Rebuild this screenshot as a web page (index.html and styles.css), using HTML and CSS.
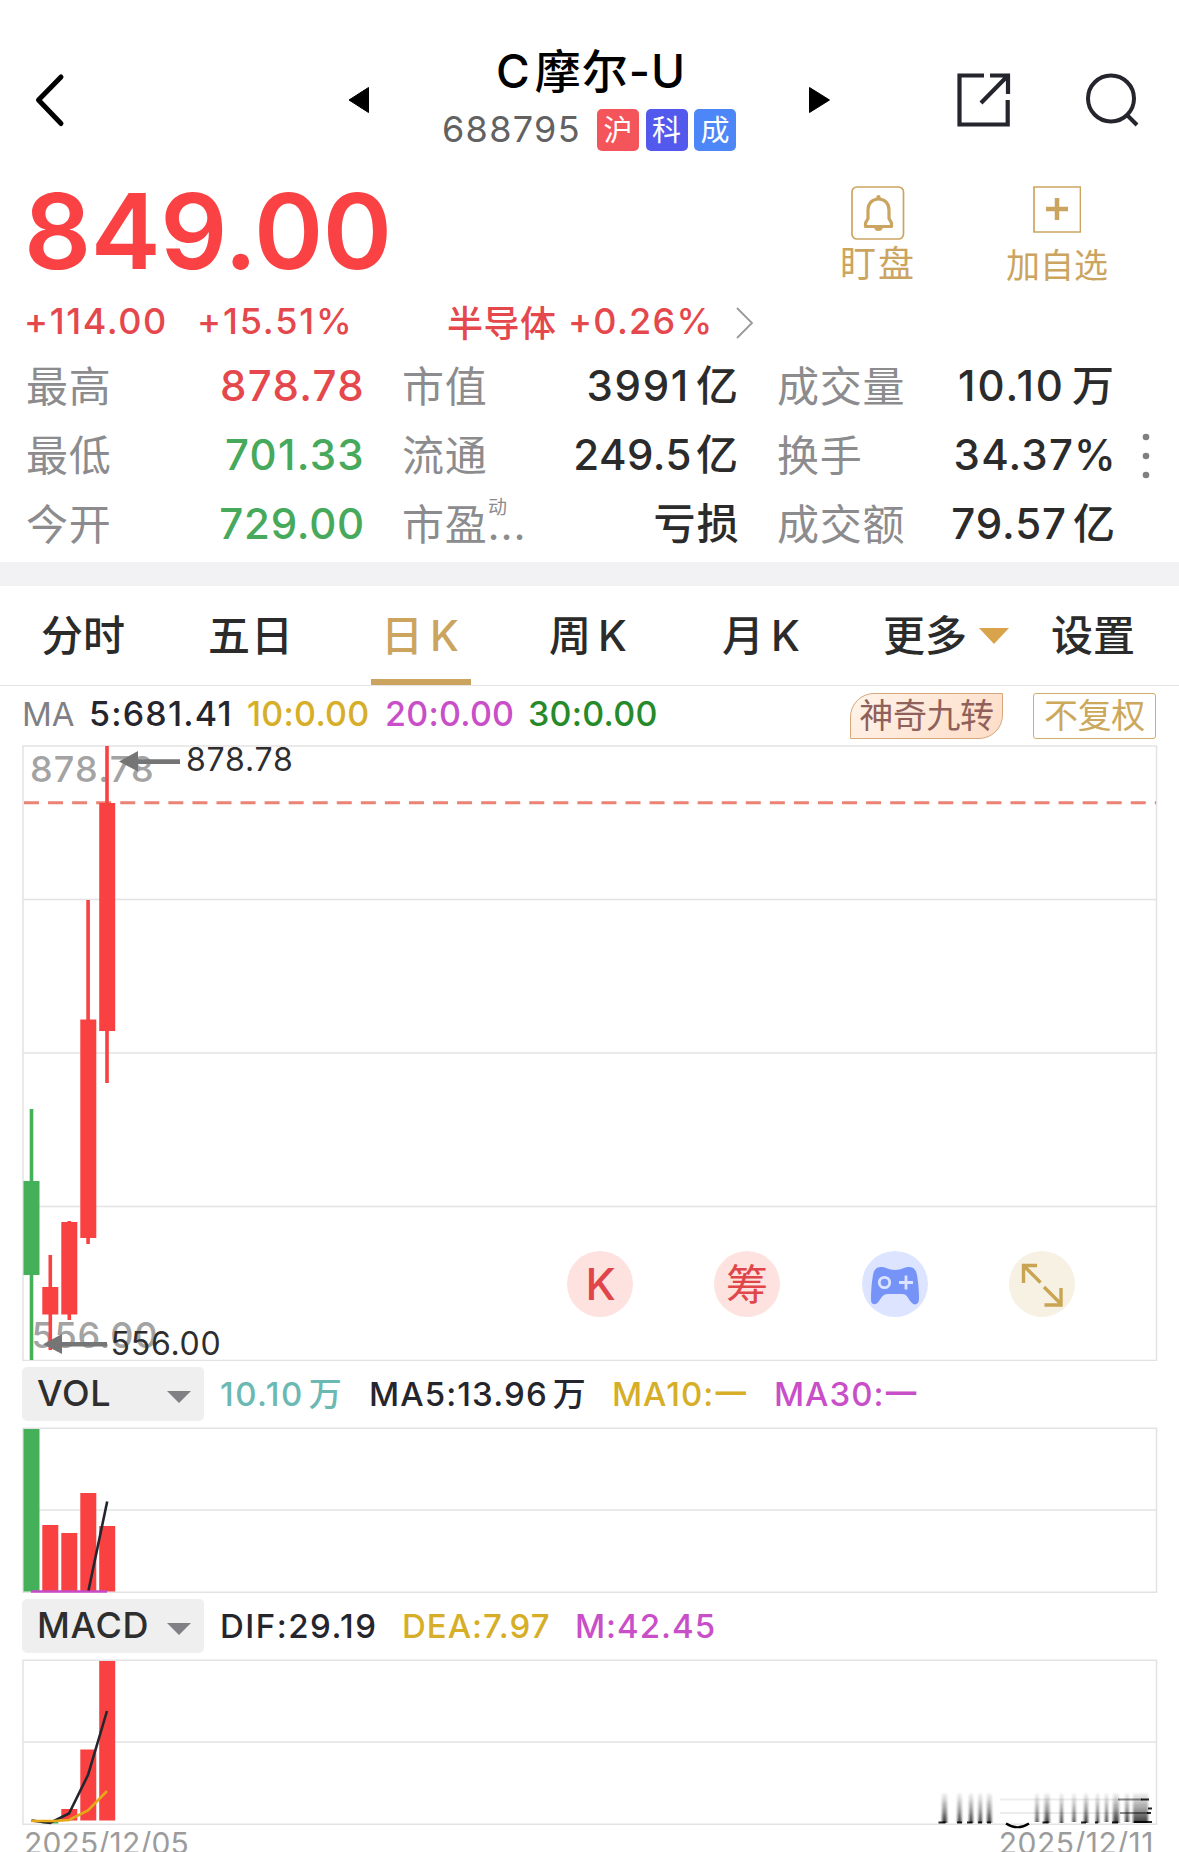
FILE: index.html
```html
<!DOCTYPE html>
<html lang="zh-CN">
<head>
<meta charset="utf-8">
<title>C摩尔-U 688795</title>
<link rel="stylesheet" href="styles.css">
</head>
<body>
<header class="topbar">
  <svg class="back" width="40" height="60" viewBox="30 70 40 60"><path d="M62 77 39.500 100 62 123.500" fill="none" stroke="#000" stroke-width="5" stroke-linecap="round" stroke-linejoin="round"/></svg>
  <svg width="22" height="28" viewBox="0 0 22 28"><path d="M20.500 1.500v25L1 14z" stroke="#000" stroke-linejoin="round"/></svg>
  <div class="heading">
    <h1 class="name"><i>C</i>摩尔-U</h1>
    <div class="code-row"><span class="code">688795</span><span class="badge hu">沪</span><span class="badge ke">科</span><span class="badge cheng">成</span></div>
  </div>
  <svg width="22" height="28" viewBox="0 0 22 28"><path d="M.5 1.500v25L20.500 14z" stroke="#000" stroke-linejoin="round"/></svg>
  <svg class="share" width="54" height="54" viewBox="0 0 54 54" fill="none" stroke="#25252d" stroke-width="4.200"><path d="M27 2.500H2.500v49h48.200V27M33 2.500h18V21M24 30 50 3.500"/></svg>
  <svg class="search" width="54" height="54" viewBox="0 0 54 54" fill="none" stroke="#25252d" stroke-width="4"><circle cx="25" cy="25.500" r="23"/><path d="m41 42 10 10"/></svg>
</header>

<section class="quote">
  <div class="price">849.00</div>
  <div class="action watch">
    <svg width="54" height="54" viewBox="0 0 54 54" fill="none" stroke="#cba560"><rect x="1" y="1" width="51.500" height="52" rx="5" stroke-width="1.700"/><path d="M27.500 13c-6.500 0-10.500 4.800-10.500 11v8.500L14.500 37v3.500h26V37L38 32.500V24c0-6.200-4-11-10.500-11Z" stroke-width="3.200" stroke-linejoin="round"/><path d="M25.300 12a2.200 3 0 0 1 4.400 0zM23 41.500h9q-1 3.500-4.500 3.500T23 41.500Z" fill="#cba560" stroke="none"/></svg>
    <span>盯盘</span>
  </div>
  <div class="action add">
    <svg width="48" height="47" viewBox="0 0 48 47" fill="none" stroke="#cba560"><path d="M1 1h46.500v45H1z" stroke-width="1.700"/><path d="M13 23h22M24 12v22" stroke-width="4.500"/></svg>
    <span>加自选</span>
  </div>
</section>

<section class="change">
  <span class="diff">+114.00</span><span class="pct">+15.51%</span><span class="sector">半导体</span><span class="sector-pct">+0.26%</span>
  <svg width="18" height="32" viewBox="0 0 18 32"><path d="m1 1 15 15L1 31" fill="none" stroke="#999" stroke-width="1.800"/></svg>
</section>

<section class="stats">
  <div class="stat-grid">
    <div class="stat"><span>最高</span><b class="up">878.78</b></div>
    <div class="stat"><span>市值</span><b class="cap">3991<i>亿</i></b></div>
    <div class="stat"><span>成交量</span><b class="turn">10.10<i>万</i></b></div>
    <div class="stat"><span>最低</span><b class="down">701.33</b></div>
    <div class="stat"><span>流通</span><b class="float">249.5<i>亿</i></b></div>
    <div class="stat"><span>换手</span><b class="rate">34.37%</b></div>
    <div class="stat"><span>今开</span><b class="down open">729.00</b></div>
    <div class="stat"><span>市盈<sup>动</sup><em>...</em></span><b>亏损</b></div>
    <div class="stat"><span>成交额</span><b class="amount">79.57<i>亿</i></b></div>
  </div>
  <svg class="more" width="8" height="46" viewBox="0 0 8 46" fill="#808080"><circle cx="4" cy="4" r="3.300"/><circle cx="4" cy="23" r="3.300"/><circle cx="4" cy="42" r="3.300"/></svg>
</section>

<nav class="tabs">
  <span>分时</span><span class="wide">五日</span><span class="active"><u>日<i>K</i></u></span><span>周<i>K</i></span><span>月<i>K</i></span>
  <span class="dropdown">更多<svg width="30" height="16" viewBox="0 0 30 16"><path d="M0 0h30L15 16z" fill="#d9a34b"/></svg></span><span>设置</span>
</nav>

<div class="ma-row">
  <span class="ma-label">MA</span><span class="ma5">5:681.41</span><span class="gold">10:0.00</span><span class="magenta">20:0.00</span><span class="green">30:0.00</span>
  <span class="nine">神奇九转</span><span class="adjust">不复权</span>
</div>

<section class="chart">
  <svg width="1179" height="616" viewBox="0 745 1179 616">
    <g fill="none" stroke="#e3e3e5" stroke-width="1.500"><path d="M23 899.500H1156M23 1053H1156M23 1206.500H1156"/><path d="M23 746h1133.500v614.500H23z"/></g>
    <g class="axis"><text x="30" y="782">878.78</text><text class="low" x="31.500" y="1347.500">556.00</text></g>
    <path d="M24 802.700H1156" stroke="#ec8274" stroke-width="3" stroke-dasharray="15 9.060"/>
    <g fill="#45b05a"><path d="M23.500 1181h16v94h-16zM29.700 1109h3.600v251h-3.600z"/></g>
    <g fill="#fa4141"><path d="M42.300 1287h16v27.500h-16zM48.500 1255h3.600v95h-3.600zM61.300 1222h16v92.500h-16zM67.500 1221h3.600v99h-3.600zM80.300 1019.500h16V1238h-16zM86.300 900h3.600v344h-3.600zM99.200 803h16v228h-16zM105.200 746h3.600v337h-3.600z"/></g>
    <g fill="#757575"><path d="m119 761.500 19-10.500v8.200h42v4.800h-42v7.500zM43 1344.300l19-10.300v8h45v4.600H62v7.400z"/></g>
    <g class="mark"><text class="hi" x="186" y="771">878.78</text><text class="lo" x="110.500" y="1354.500">556.00</text></g>
  </svg>
  <div class="tools">
    <span class="tool k">K</span>
    <span class="tool chip">筹</span>
    <span class="tool game"><svg width="66" height="66" viewBox="0 0 66 66"><path d="M11 24c1-6 4-8 9-8 4 0 6 3 13 3s9-3 13-3c5 0 8 2 9 8 1.500 8 2 17 2 24 0 6-5 7-8 3-4-5-4-8-9-8H26c-5 0-6 3-9 7-3 5-8 4-8-1 0-8 .5-17 2-25Z" fill="#7693f8"/><circle cx="22.500" cy="31.500" r="5.200" fill="none" stroke="#dce4ff" stroke-width="2.800"/><path d="M37 31.500h14M44 24.500v14" stroke="#dce4ff" stroke-width="2.800"/></svg></span>
    <span class="tool expand"><svg width="66" height="66" viewBox="0 0 66 66" fill="none" stroke="#c9a452" stroke-width="3.400"><path d="M28 14.500H14.500V32M15 15l16.500 16.500M35 36l16.500 16.500M52 37v17H35.500"/></svg></span>
  </div>
</section>

<div class="indicator vol">
  <span class="select">VOL<svg width="24" height="12" viewBox="0 0 24 12"><path d="M0 0h24L12 12z" fill="#808085"/></svg></span>
  <span class="teal">10.10<i>万</i></span><span class="dark">MA5:13.96<i>万</i></span><span class="gold">MA10:一</span><span class="magenta">MA30:一</span>
</div>
<svg class="sub" width="1179" height="166" viewBox="0 1427 1179 166">
  <g fill="none" stroke="#e3e3e5" stroke-width="1.500"><path d="M23 1510H1156"/><path d="M23 1428.300h1133.500v163.900H23z"/></g>
  <path d="M23.500 1429h16v162.500h-16z" fill="#45b05a"/>
  <path d="M42.300 1525h16v66.500h-16zM61.300 1533h16v58.500h-16zM80.300 1493h16v98.500h-16zM99.200 1526h16v65.500h-16z" fill="#fa4141"/>
  <path d="M31 1591.500h76" stroke="#c74bc7" stroke-width="2.500"/>
  <path d="m88.500 1590.500 18.700-89" stroke="#25252d" stroke-width="2.600"/>
</svg>

<div class="indicator macd">
  <span class="select">MACD<svg width="24" height="12" viewBox="0 0 24 12"><path d="M0 0h24L12 12z" fill="#808085"/></svg></span>
  <span class="dark">DIF:29.19</span><span class="gold">DEA:7.97</span><span class="magenta">M:42.45</span>
</div>
<svg class="sub" width="1179" height="172" viewBox="0 1659 1179 172">
  <defs>
    <linearGradient id="fade" x1="0" y1="1792" x2="0" y2="1824" gradientUnits="userSpaceOnUse"><stop offset="0" stop-color="#222" stop-opacity="0"/><stop offset=".6" stop-color="#222" stop-opacity=".5"/><stop offset="1" stop-color="#000" stop-opacity=".85"/></linearGradient>
    <filter id="smear"><feGaussianBlur stdDeviation="1.1 0.6"/></filter>
  </defs>
  <g fill="none" stroke="#e3e3e5" stroke-width="1.500"><path d="M23 1742H1156"/><path d="M23 1660.300h1133.500v163.900H23z"/></g>
  <path d="M42.300 1821h16v2.500h-16z" fill="#45b05a"/>
  <path d="M61.300 1809h16v11.500h-16zM80.300 1749.500h16v71h-16zM99.200 1661h16v159.500h-16z" fill="#fa4141"/>
  <path d="M31.500 1820.500 50 1823 69 1813.500 88 1775l19-64" fill="none" stroke="#25252d" stroke-width="2.600"/>
  <path d="M31.500 1821H54l15-1 19-9.500 19-19.500" fill="none" stroke="#e6a817" stroke-width="2.600"/>
  <path filter="url(#smear)" d="M942 1792h5v31h-5zM957.500 1792h4v31h-4zM969 1792h4v31h-4zM978.500 1792h3.500v31h-3.500zM987 1792h4.500v31H987zM1035.500 1792h3v30h-3zM1044.500 1792h5v31h-5zM1060 1792h3v31h-3zM1072.500 1792h3v30h-3zM1084 1792h4v31h-4zM1096 1792h3v31h-3zM1105 1792h3v30h-3zM1113 1792h6v31h-6zM1125 1792h4v30h-4zM1133 1792h15v31h-15z" fill="url(#fade)"/>
  <path d="M1000 1799.500h120M1000 1813h120" stroke="#000" stroke-width="2" opacity=".07"/>
  <path d="M938.500 1822.500h7M957 1822.500h5M967 1822.500h5.500M978 1822.500h4M987 1822.500h4M1042.500 1822.500h6M1081 1822.500h5M1095 1822.500h3M1112 1822.500h6M1134 1822h18M1141 1799.500h8M1147 1813h4M1148 1808.500h4" stroke="#000" stroke-width="2.200" opacity=".85"/>
  <path d="M1118 1799.500h24M1120 1813h28" stroke="#000" stroke-width="2.200" opacity=".45"/>
  <path d="M1006 1823.500q11.500 7.500 23 0" fill="none" stroke="#000" stroke-width="2.200"/>
</svg>
<footer class="dates"><span>2025/12/05</span><span class="end">2025/12/11</span></footer>
</body>
</html>
```
FILE: styles.css
```css
* { box-sizing: border-box; }
html { overflow: hidden; }
body { margin: 0; width: 1179px; height: 1852px; overflow: hidden; background: #fff; color: #2b2b2b; font-family: Inter, "Noto Sans CJK SC", sans-serif; }
svg { display: block; }
i, em, b, u { font-style: normal; text-decoration: none; font-weight: inherit; }

.topbar { display: grid; grid-template-columns: 348px 94px 367px 149px 129px 92px; align-items: center; height: 170px; padding-top: 30px; }
.back { margin-left: 29px; }
.share, .search { margin-left: -1px; }
.heading { align-self: start; padding-top: 11px; }
.name { margin: 0; padding-left: 54px; font-size: 46px; line-height: 61px; font-weight: 500; letter-spacing: 1px; color: #000; }
.name i { margin-right: 4px; }
.code-row { display: flex; align-items: center; gap: 6.500px; height: 58px; margin-top: -1px; }
.code { width: 148.500px; font-size: 36px; line-height: 54px; margin-top: -3px; letter-spacing: 1.300px; color: #626262; }
.badge { width: 42px; height: 42px; border-radius: 5px; color: #fff; font-size: 29px; line-height: 43px; text-align: center; }
.hu { background: #f4555b; }
.ke { background: #5459ee; }
.cheng { background: #4c86f7; }

.quote { display: grid; grid-template-columns: 816px 166px 1fr; height: 120px; padding-left: 24px; }
.price { font-size: 105px; line-height: 121px; font-weight: 600; letter-spacing: -.5px; color: #fa4144; }
.action { color: #cba560; line-height: 42px; padding-top: 16px; }
.action span { display: block; }
.watch { font-size: 36px; letter-spacing: 2px; }
.watch svg { margin-left: 11px; }
.watch span { margin-top: 3px; }
.add { font-size: 34px; }
.add svg { margin-left: 27px; }
.add span { margin-top: 12px; }

.change { display: flex; align-items: center; height: 61px; padding-left: 24px; font-size: 36px; font-weight: 500; color: #e5484c; }
.diff { width: 173px; letter-spacing: 1.600px; }
.pct { width: 250px; letter-spacing: 1.850px; }
.sector { width: 121px; letter-spacing: .5px; }
.sector-pct { width: 168px; letter-spacing: 1.300px; }
.change svg { margin-top: 4px; }

.stats { display: flex; align-items: center; height: 211px; padding: 0 0 4px 26px; }
.stat-grid { display: grid; grid-template-columns: 339px 338px 340px; column-gap: 37px; grid-auto-rows: 69px; font-size: 42px; line-height: 69px; }
.stat { display: flex; justify-content: space-between; white-space: nowrap; }
.stat span { position: relative; padding-top: 1px; color: #8c8c8e; font-weight: 400; letter-spacing: .8px; }
.stat b { font-weight: 500; letter-spacing: 1.300px; }
.stat b i { margin-left: 6px; letter-spacing: 0; }
.stat .up { color: #e5484c; }
.stat .down { color: #46a95b; }
.stat .open { letter-spacing: .8px; }
.stat .cap { letter-spacing: 1.700px; margin-right: 2px; }
.stat .float { letter-spacing: .5px; margin-right: 2px; }
.stat .float i { margin-left: 4px; }
.stat .turn { letter-spacing: 2px; margin-right: 3px; }
.stat .turn i { margin-left: 7px; }
.stat .amount { letter-spacing: .9px; margin-right: 2px; }
.stat .rate { letter-spacing: 1.200px; }
.stat sup { position: absolute; left: 86px; top: -13px; font-size: 19px; line-height: 64px; }
.more { margin: 3px 0 0 25px; }

.tabs { display: grid; grid-template-columns: 167px 163px 178px 173px 161px 168px 1fr; height: 124px; padding-left: 41px; border-top: 24px solid #f2f2f5; border-bottom: 1px solid #e4e4e6; font-size: 42px; line-height: 99px; font-weight: 500; }
.wide { letter-spacing: 1px; }
.tabs i { margin-left: 7px; }
.active u { display: block; width: 100px; height: 99px; padding-left: 10px; border-bottom: 6px solid #cba560; color: #cba560; }
.dropdown { display: flex; align-items: center; gap: 12px; }

.ma-row { display: grid; grid-template-columns: 68px 158px 138px 143px 322px 183px 123px; height: 59px; padding-left: 21px; font-size: 34px; line-height: 56px; font-weight: 500; }
.ma-label { color: #808084; font-weight: 400; font-size: 33px; letter-spacing: 0; padding-left: 1px; }
.ma5 { letter-spacing: 1.200px; color: #25252d; }
.ma-row .gold, .ma-row .magenta, .ma-row .green { letter-spacing: .25px; }
.gold { color: #d6ae27; }
.magenta { color: #c84fc8; }
.green { color: #268a2b; }
.nine, .adjust { height: 46px; margin-top: 6.500px; line-height: 44px; font-weight: 400; text-align: center; letter-spacing: -.4px; }
.nine { width: 153px; border: 1.500px solid #d6a77d; border-radius: 24px 0 24px 0; background: linear-gradient(135deg, #fff4ea, #fddcc6); color: #90605a; }
.adjust { border: 1.500px solid #cfae6c; border-radius: 3px; color: #cba85c; }

.chart { position: relative; height: 616px; }
.axis { font-size: 36px; font-weight: 500; fill: #a3a3a3; letter-spacing: 1.200px; }
.low { letter-spacing: .7px; }
.mark { font-size: 32px; fill: #2e2e2e; }
.hi { letter-spacing: .8px; }
.lo { letter-spacing: .75px; }
.tools { position: absolute; left: 566.500px; top: 506px; display: flex; gap: 81.600px; }
.tool { width: 66px; height: 66px; border-radius: 50%; line-height: 67px; text-align: center; color: #e04549; font-size: 42px; }
.k { background: #fde2e0; font-size: 44px; font-weight: 500; padding-left: 2px; }
.chip { background: #fde2e0; }
.game { background: #dce4ff; }
.expand { background: #f7f1e4; }

.indicator { display: grid; height: 66px; padding-left: 22px; font-size: 33px; line-height: 66px; font-weight: 500; white-space: nowrap; }
.vol { grid-template-columns: 198px 149px 243px 162px 1fr; }
.macd { grid-template-columns: 198px 182px 173px 1fr; }
.select { display: flex; align-items: center; justify-content: space-between; width: 182px; height: 54px; margin-top: 6px; padding: 0 13px 3px 15px; border-radius: 5px; background: #efefef; font-size: 36px; line-height: 50px; letter-spacing: .7px; color: #2e2e2e; }
.select svg { margin-top: 9px; }
.teal { color: #6cb8b3; letter-spacing: 1.500px; }
.indicator i { margin-left: 5px; }
.dark { color: #25252d; letter-spacing: 1.100px; }
.macd .dark { letter-spacing: 1.500px; }
.indicator .gold, .indicator .magenta { letter-spacing: 1px; }

.dates { display: flex; justify-content: space-between; height: 21px; padding: 0 25px 0 24px; font-size: 30px; line-height: 25px; color: #9c9c9c; letter-spacing: .2px; overflow: hidden; }
.end { letter-spacing: .5px; }
```
